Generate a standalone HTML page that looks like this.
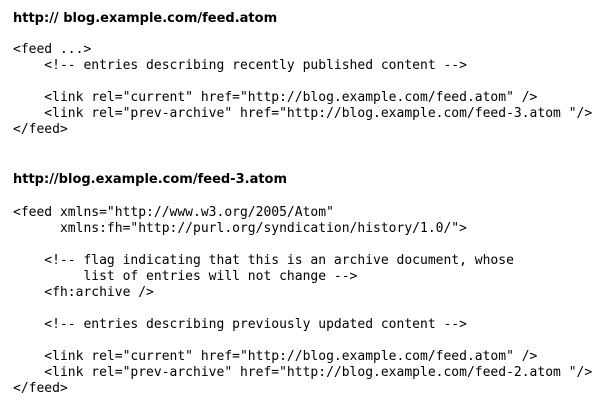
<!DOCTYPE html>
<html><head><meta charset="utf-8"><style>
html,body{margin:0;padding:0;background:#fff;width:600px;height:405px;overflow:hidden}
.h{position:absolute;left:13px;font:bold 13px/16px "DejaVu Sans",sans-serif;color:#000;margin:0}
pre{position:absolute;left:13px;margin:0;font:13px/16px "DejaVu Sans Mono",monospace;color:#000}
</style></head><body>
<div class="h" style="top:11px">http:// blog.example.com/feed.atom</div>
<pre style="top:42px">&lt;feed ...&gt;
    &lt;!-- entries describing recently published content --&gt;

    &lt;link rel="current" href="http://blog.example.com/feed.atom" /&gt;
    &lt;link rel="prev-archive" href="http://blog.example.com/feed-3.atom "/&gt;
&lt;/feed&gt;</pre>
<div class="h" style="top:172px">http://blog.example.com/feed-3.atom</div>
<pre style="top:205px">&lt;feed xmlns="http://www.w3.org/2005/Atom"
      xmlns:fh="http://purl.org/syndication/history/1.0/"&gt;

    &lt;!-- flag indicating that this is an archive document, whose
         list of entries will not change --&gt;
    &lt;fh:archive /&gt;

    &lt;!-- entries describing previously updated content --&gt;

    &lt;link rel="current" href="http://blog.example.com/feed.atom" /&gt;
    &lt;link rel="prev-archive" href="http://blog.example.com/feed-2.atom "/&gt;
&lt;/feed&gt;</pre>
</body></html>
